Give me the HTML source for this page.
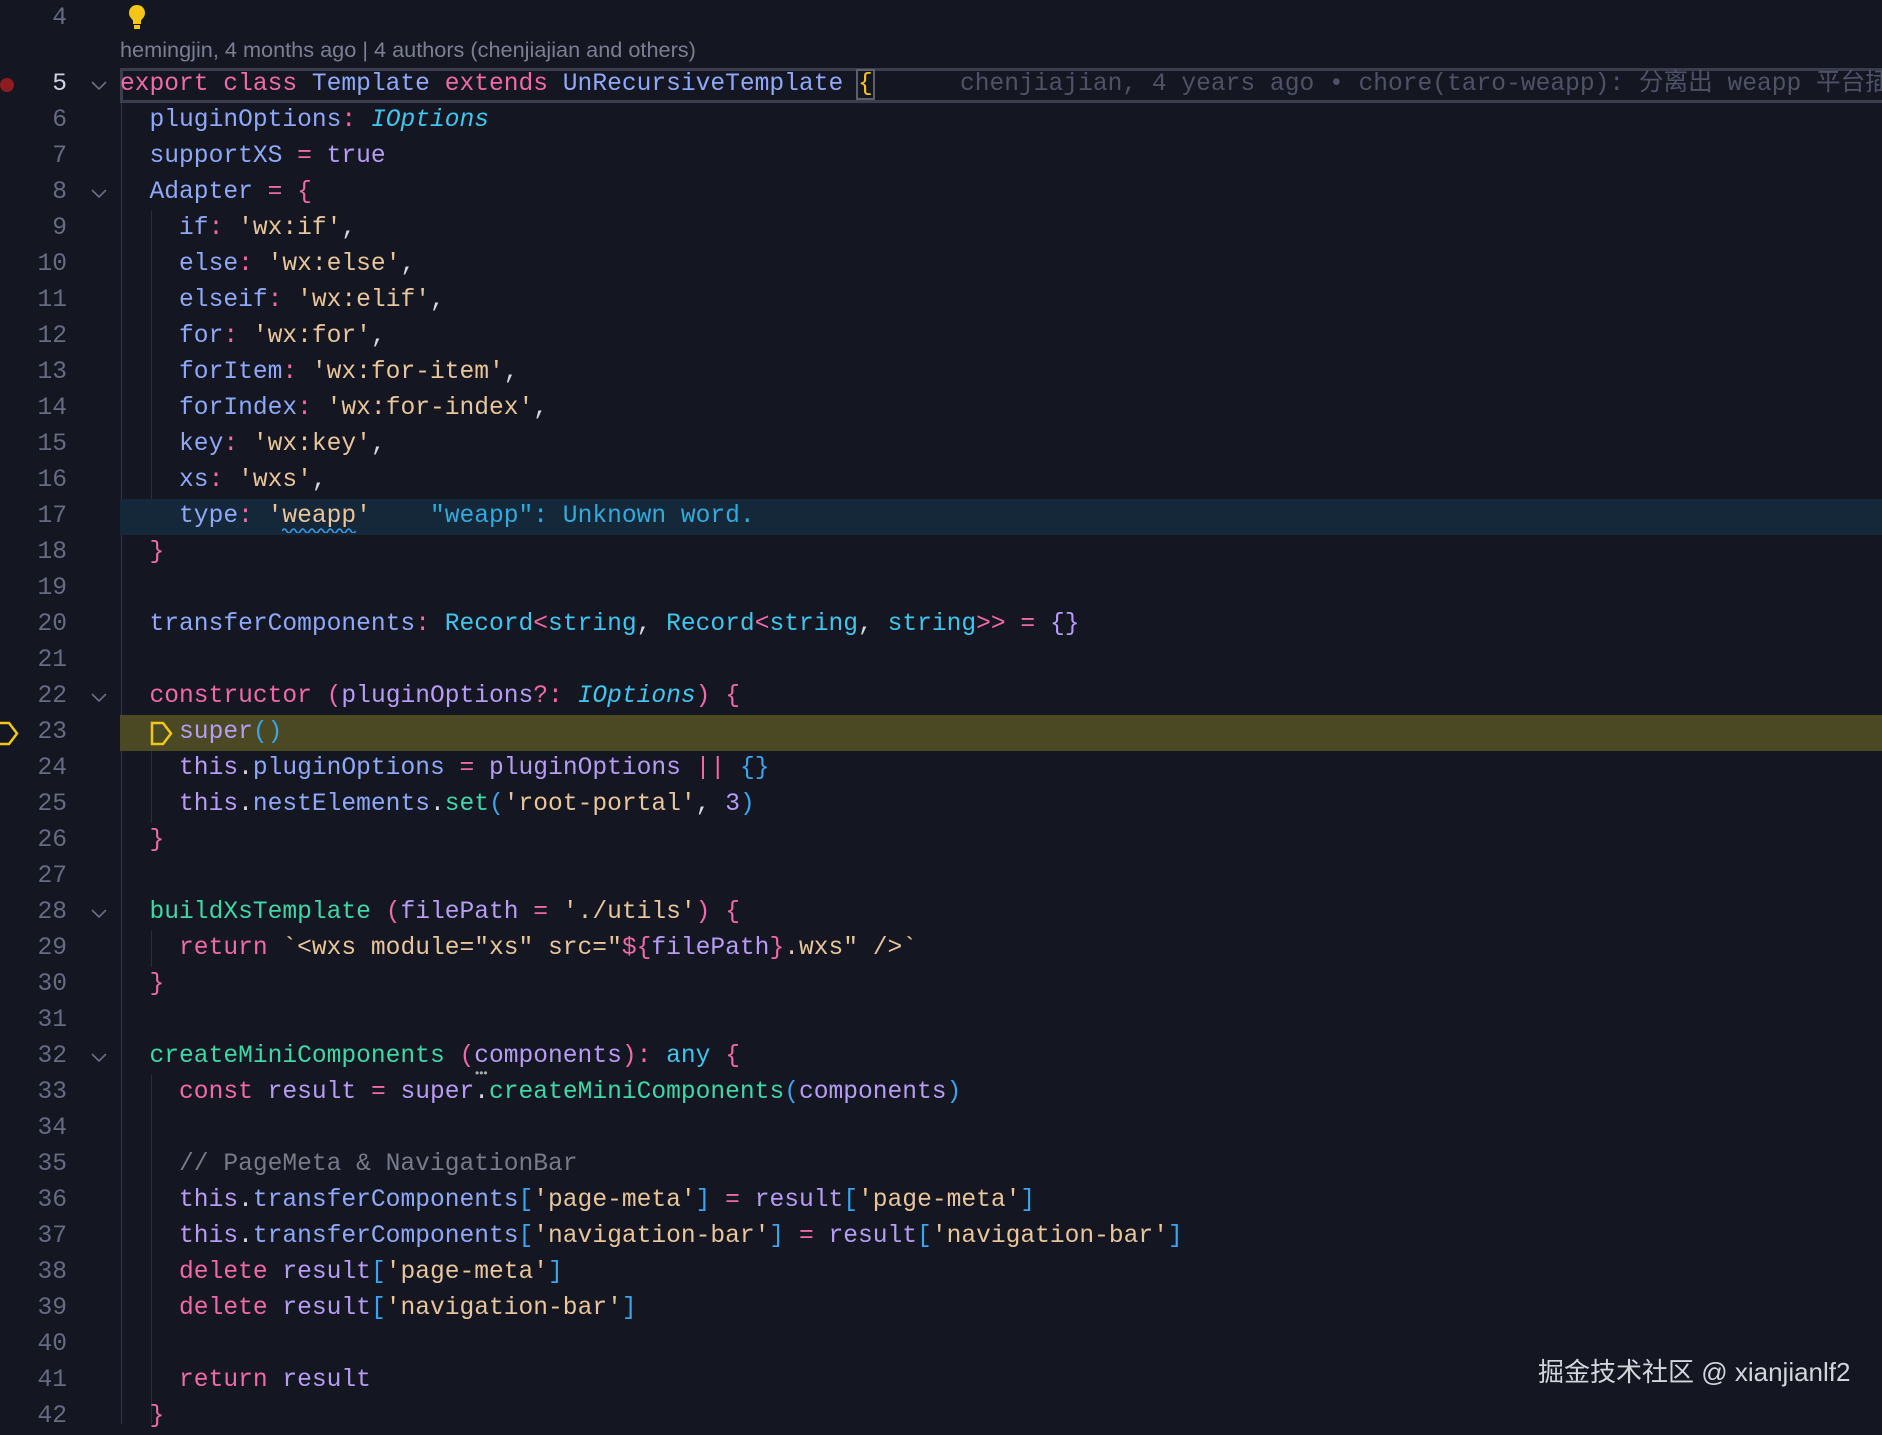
<!DOCTYPE html>
<html><head><meta charset="utf-8">
<style>
*{margin:0;padding:0;box-sizing:border-box}
body{width:1882px;height:1422px;background:#141622;overflow:hidden;position:relative;font-family:"Liberation Mono","Noto Sans CJK SC",monospace;}
#w{position:absolute;left:0;top:2px;width:1882px;height:1422px}
.r{position:absolute;left:0;width:1882px;height:36px;line-height:36px;font-size:24.6px;white-space:pre}
.n{position:absolute;left:0;width:67px;text-align:right;color:#676b82}
.c{position:absolute;left:120px;color:#d6d8e6}
.k{color:#ef6aa8}.p{color:#8fa8f7}.v{color:#b69cf3}.s{color:#e8c59a}.m{color:#3ed8a6}.t{color:#3fc6ee}.i{color:#3fc6ee;font-style:italic}.y{color:#f3c623}.b{color:#3aa5ec}.g{color:#777a8a}.o{color:#ef6aa8}
.fold{position:absolute;left:90px;top:13px}
.guide{position:absolute;width:1px;background:#2b2e3c}
</style></head><body><div id="w">

<div class="guide" style="left:121px;top:101px;height:1321px;background:#33364a"></div>
<div class="guide" style="left:151px;top:209px;height:324px"></div>
<div class="guide" style="left:151px;top:749px;height:72px"></div>
<div class="guide" style="left:151px;top:929px;height:36px"></div>
<div class="guide" style="left:151px;top:1073px;height:349px"></div>

<div style="position:absolute;left:120px;top:497px;width:1762px;height:36px;background:#15283a"></div>
<div style="position:absolute;left:120px;top:713px;width:1762px;height:36px;background:#4a4923"></div>
<div style="position:absolute;left:120px;top:66px;width:1762px;height:35px;border:3px solid #3a3d4d;border-right:none"></div>

<div class="r" style="top:-1px"><span class="n">4</span></div>
<svg style="position:absolute;left:127px;top:2px" width="20" height="28" viewBox="0 0 20 28"><path d="M10 1C5 1 2 4.5 2 9c0 3.5 2.5 5.5 4 7.5V20h8v-3.5c1.5-2 4-4 4-7.5C18 4.5 15 1 10 1z" fill="#f5c518"/><rect x="7" y="21" width="6" height="4" fill="#f5c518"/></svg>
<div style="position:absolute;left:120px;top:35px;font-family:'Liberation Sans',sans-serif;font-size:21.7px;color:#7c7f92;line-height:26px;white-space:nowrap">hemingjin, 4 months ago | 4 authors (chenjiajian and others)</div>

<div style="position:absolute;left:0;top:76px;width:14px;height:14px;border-radius:50%;background:#8a1c22"></div>

<div class="r" style="top:65px"><span class="n" style="color:#cfd2e4">5</span><svg class="fold" width="18" height="12"><polyline points="2,2 9,9 16,2" fill="none" stroke="#6b6f84" stroke-width="1.6"/></svg><span class="c"><span class="k">export class</span> <span class="p">Template</span> <span class="k">extends</span> <span class="p">UnRecursiveTemplate</span> <span class="y" style="outline:2px solid #5d5f6a">{</span></span><span style="position:absolute;left:960px;color:#4f5266">chenjiajian, 4 years ago • chore(taro-weapp): 分离出 weapp 平台插件</span></div>
<div class="r" style="top:101px"><span class="n">6</span><span class="c">  <span class="p">pluginOptions</span><span class="o">:</span> <span class="i">IOptions</span></span></div>
<div class="r" style="top:137px"><span class="n">7</span><span class="c">  <span class="p">supportXS</span> <span class="o">=</span> <span class="v">true</span></span></div>
<div class="r" style="top:173px"><span class="n">8</span><svg class="fold" width="18" height="12"><polyline points="2,2 9,9 16,2" fill="none" stroke="#6b6f84" stroke-width="1.6"/></svg><span class="c">  <span class="p">Adapter</span> <span class="o">=</span> <span class="k">{</span></span></div>
<div class="r" style="top:209px"><span class="n">9</span><span class="c">    <span class="p">if</span><span class="o">:</span> <span class="s">'wx:if'</span>,</span></div>
<div class="r" style="top:245px"><span class="n">10</span><span class="c">    <span class="p">else</span><span class="o">:</span> <span class="s">'wx:else'</span>,</span></div>
<div class="r" style="top:281px"><span class="n">11</span><span class="c">    <span class="p">elseif</span><span class="o">:</span> <span class="s">'wx:elif'</span>,</span></div>
<div class="r" style="top:317px"><span class="n">12</span><span class="c">    <span class="p">for</span><span class="o">:</span> <span class="s">'wx:for'</span>,</span></div>
<div class="r" style="top:353px"><span class="n">13</span><span class="c">    <span class="p">forItem</span><span class="o">:</span> <span class="s">'wx:for-item'</span>,</span></div>
<div class="r" style="top:389px"><span class="n">14</span><span class="c">    <span class="p">forIndex</span><span class="o">:</span> <span class="s">'wx:for-index'</span>,</span></div>
<div class="r" style="top:425px"><span class="n">15</span><span class="c">    <span class="p">key</span><span class="o">:</span> <span class="s">'wx:key'</span>,</span></div>
<div class="r" style="top:461px"><span class="n">16</span><span class="c">    <span class="p">xs</span><span class="o">:</span> <span class="s">'wxs'</span>,</span></div>
<div class="r" style="top:497px"><span class="n">17</span><span class="c">    <span class="p">type</span><span class="o">:</span> <span class="s">'weapp'</span>    <span style="color:#34a9dc">"weapp": Unknown word.</span></span></div>
<svg style="position:absolute;left:282px;top:525px" width="74" height="6"><path d="M0 4 Q2.3 0 4.6 4 T9.2 4 T13.8 4 T18.4 4 T23 4 T27.6 4 T32.2 4 T36.8 4 T41.4 4 T46 4 T50.6 4 T55.2 4 T59.8 4 T64.4 4 T69 4 T73.6 4" fill="none" stroke="#3a9be8" stroke-width="1.6"/></svg>
<div class="r" style="top:533px"><span class="n">18</span><span class="c">  <span class="k">}</span></span></div>
<div class="r" style="top:569px"><span class="n">19</span></div>
<div class="r" style="top:605px"><span class="n">20</span><span class="c">  <span class="p">transferComponents</span><span class="o">:</span> <span class="t">Record</span><span class="o">&lt;</span><span class="t">string</span>, <span class="t">Record</span><span class="o">&lt;</span><span class="t">string</span>, <span class="t">string</span><span class="o">&gt;&gt;</span> <span class="o">=</span> <span class="v">{}</span></span></div>
<div class="r" style="top:641px"><span class="n">21</span></div>
<div class="r" style="top:677px"><span class="n">22</span><svg class="fold" width="18" height="12"><polyline points="2,2 9,9 16,2" fill="none" stroke="#6b6f84" stroke-width="1.6"/></svg><span class="c">  <span class="k">constructor</span> <span class="k">(</span><span class="v">pluginOptions</span><span class="o">?:</span> <span class="i">IOptions</span><span class="k">)</span> <span class="k">{</span></span></div>
<svg style="position:absolute;left:0;top:719px" width="20" height="25"><path d="M-2 2H9L17 12.5L9 23H-2" fill="none" stroke="#f2c818" stroke-width="2.5"/></svg>
<svg style="position:absolute;left:150px;top:719px" width="26" height="25"><path d="M2 2H13L21 12.5L13 23H2Z" fill="none" stroke="#f2c818" stroke-width="2.5"/></svg>
<div class="r" style="top:713px"><span class="n">23</span><span class="c">    <span class="v">super</span><span class="b">()</span></span></div>
<div class="r" style="top:749px"><span class="n">24</span><span class="c">    <span class="v">this</span>.<span class="p">pluginOptions</span> <span class="o">=</span> <span class="v">pluginOptions</span> <span class="o">||</span> <span class="b">{}</span></span></div>
<div class="r" style="top:785px"><span class="n">25</span><span class="c">    <span class="v">this</span>.<span class="p">nestElements</span>.<span class="m">set</span><span class="b">(</span><span class="s">'root-portal'</span>, <span class="v">3</span><span class="b">)</span></span></div>
<div class="r" style="top:821px"><span class="n">26</span><span class="c">  <span class="k">}</span></span></div>
<div class="r" style="top:857px"><span class="n">27</span></div>
<div class="r" style="top:893px"><span class="n">28</span><svg class="fold" width="18" height="12"><polyline points="2,2 9,9 16,2" fill="none" stroke="#6b6f84" stroke-width="1.6"/></svg><span class="c">  <span class="m">buildXsTemplate</span> <span class="k">(</span><span class="v">filePath</span> <span class="o">=</span> <span class="s">'./utils'</span><span class="k">)</span> <span class="k">{</span></span></div>
<div class="r" style="top:929px"><span class="n">29</span><span class="c">    <span class="k">return</span> <span class="s">`&lt;wxs module="xs" src="</span><span class="k">${</span><span class="v">filePath</span><span class="k">}</span><span class="s">.wxs" /&gt;`</span></span></div>
<div class="r" style="top:965px"><span class="n">30</span><span class="c">  <span class="k">}</span></span></div>
<div class="r" style="top:1001px"><span class="n">31</span></div>
<div class="r" style="top:1037px"><span class="n">32</span><svg class="fold" width="18" height="12"><polyline points="2,2 9,9 16,2" fill="none" stroke="#6b6f84" stroke-width="1.6"/></svg><span class="c">  <span class="m">createMiniComponents</span> <span class="k">(</span><span class="v">components</span><span class="k">)</span><span class="o">:</span> <span class="t">any</span> <span class="k">{</span></span></div>
<div style="position:absolute;left:475px;top:1067px;color:#aaa;font-size:12px;line-height:8px;font-family:'Liberation Sans'">•••</div>
<div class="r" style="top:1073px"><span class="n">33</span><span class="c">    <span class="k">const</span> <span class="v">result</span> <span class="o">=</span> <span class="v">super</span>.<span class="m">createMiniComponents</span><span class="b">(</span><span class="v">components</span><span class="b">)</span></span></div>
<div class="r" style="top:1109px"><span class="n">34</span></div>
<div class="r" style="top:1145px"><span class="n">35</span><span class="c">    <span class="g">// PageMeta &amp; NavigationBar</span></span></div>
<div class="r" style="top:1181px"><span class="n">36</span><span class="c">    <span class="v">this</span>.<span class="p">transferComponents</span><span class="b">[</span><span class="s">'page-meta'</span><span class="b">]</span> <span class="o">=</span> <span class="v">result</span><span class="b">[</span><span class="s">'page-meta'</span><span class="b">]</span></span></div>
<div class="r" style="top:1217px"><span class="n">37</span><span class="c">    <span class="v">this</span>.<span class="p">transferComponents</span><span class="b">[</span><span class="s">'navigation-bar'</span><span class="b">]</span> <span class="o">=</span> <span class="v">result</span><span class="b">[</span><span class="s">'navigation-bar'</span><span class="b">]</span></span></div>
<div class="r" style="top:1253px"><span class="n">38</span><span class="c">    <span class="k">delete</span> <span class="v">result</span><span class="b">[</span><span class="s">'page-meta'</span><span class="b">]</span></span></div>
<div class="r" style="top:1289px"><span class="n">39</span><span class="c">    <span class="k">delete</span> <span class="v">result</span><span class="b">[</span><span class="s">'navigation-bar'</span><span class="b">]</span></span></div>
<div class="r" style="top:1325px"><span class="n">40</span></div>
<div class="r" style="top:1361px"><span class="n">41</span><span class="c">    <span class="k">return</span> <span class="v">result</span></span></div>
<div class="r" style="top:1397px"><span class="n">42</span><span class="c">  <span class="k">}</span></span></div>

<div style="position:absolute;left:1538px;top:1354px;font-family:'Liberation Sans','Noto Sans CJK SC',sans-serif;font-size:26px;color:#d4d5db;line-height:32px;white-space:nowrap">掘金技术社区 @ xianjianlf2</div>
</div></body></html>
